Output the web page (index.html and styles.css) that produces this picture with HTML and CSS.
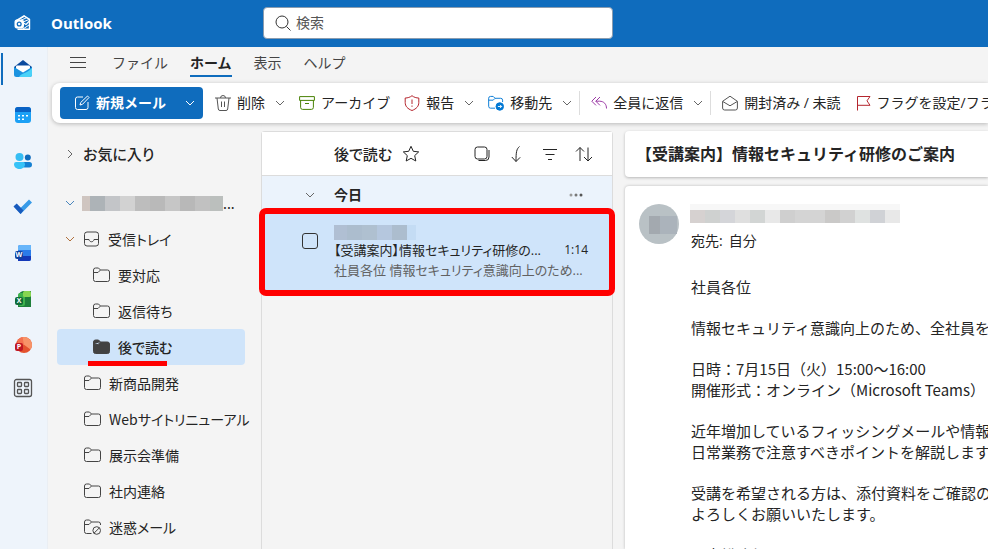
FILE: index.html
```
<!DOCTYPE html>
<html lang="ja">
<head>
<meta charset="utf-8">
<title>Outlook</title>
<link rel="stylesheet" href="styles.css">
</head>
<body>
<svg class="defs" aria-hidden="true">
	<symbol id="down" viewBox="0 0 10 10"><path d="M1 3l4 4 4-4"/></symbol>
	<symbol id="right" viewBox="0 0 10 10"><path d="M3 1l4 4-4 4"/></symbol>
	<symbol id="folder" viewBox="0 0 17 16"><path d="M.5 3A2 2 0 0 1 2.500 1h3l2 2H14.500a2 2 0 0 1 2 2V12.500a2 2 0 0 1-2 2H2.500a2 2 0 0 1-2-2zM.5 5.500h4.500L7.500 3"/></symbol>
</svg>
<header class="top">
	<svg class="logo" viewBox="0 0 18 18" aria-hidden="true">
		<path d="M1.500 7L10 1.800l5.500 3.500v10H3.500" fill="none" stroke="#fff" stroke-width="1.400" stroke-linejoin="round"/>
		<path d="M4 6l7-4M6.500 6.500L13 3.500M9 8l6.500-2.700M9 15l6-4" fill="none" stroke="#fff"/>
		<rect x="1" y="6" width="8.500" height="8" rx="1.500" fill="#fff"/>
		<circle cx="5.200" cy="10" r="1.900" fill="none" stroke="#0f6cbd" stroke-width="1.300"/>
		<path d="M9.500 9l2.500 1.500 3.500-3.500" fill="none" stroke="#fff" stroke-width="1.200"/>
	</svg>
	<h1>Outlook</h1>
	<label class="search">
		<svg viewBox="0 0 18 18" width="18" height="18" aria-hidden="true"><circle cx="8" cy="8" r="6"/><path d="M12.500 12.500L16.500 16.500"/></svg>
		<input type="search" placeholder="検索" aria-label="検索">
	</label>
</header>
<div class="shell">
	<nav class="rail" aria-label="アプリ">
		<a class="on" href="#" aria-label="メール"><svg viewBox="0 0 20 20">
			<path d="M1 8l9-7 9 7v3H1z" fill="#0b4a9e"/><path d="M4 6.500h12a1 1 0 0 1 1 1V15H3V7.500a1 1 0 0 1 1-1z" fill="#fff"/>
			<path d="M1 8l9 5.500L19 8v7.500a2.500 2.500 0 0 1-2.500 2.500h-13A2.500 2.500 0 0 1 1 15.500z" fill="#1b93e0"/><path d="M6 18c2-4 7-3 13-9v6.500a2.500 2.500 0 0 1-2.500 2.500z" fill="#4ad2f8"/></svg></a>
		<a href="#" aria-label="予定表"><svg viewBox="0 0 20 20">
			<rect x="2" y="2" width="16" height="16" rx="3" fill="#1ca0f5"/><path d="M2 7V5a3 3 0 0 1 3-3h10a3 3 0 0 1 3 3v2z" fill="#0a62c4"/>
			<path d="M5 10h2v1.500H5zM9 10h2v1.500H9zM13 10h2v1.500h-2zM5 13.500h2V15H5zM9 13.500h2V15H9z" fill="#fff"/></svg></a>
		<a href="#" aria-label="連絡先"><svg viewBox="0 0 20 20">
			<circle cx="6.500" cy="6" r="4" fill="#35bdf3"/><circle cx="14.800" cy="6.500" r="3" fill="#0f6cbd"/>
			<rect x="9" y="11" width="10" height="5.500" rx="2.700" fill="#1580d2"/><path d="M1 13.200A2.200 2.200 0 0 1 3.200 11H9.800A2.200 2.200 0 0 1 12 13.200C12 19.500 1 19.500 1 13.200z" fill="#37c2f7"/></svg></a>
		<a href="#" aria-label="To Do"><svg viewBox="0 0 20 20">
			<path d="M1 9.500L3.500 7l4 4L16 2.500 19 5.500 7.700 17z" fill="#389be8"/><path d="M.5 9.500L3.700 6.500 10.500 13.500 7.500 17z" fill="#185abd"/></svg></a>
		<a href="#" aria-label="Word"><svg viewBox="0 0 20 20">
			<rect x="5" y="2" width="13" height="16" rx="2" fill="#2b7cea"/><path d="M5 7V4a2 2 0 0 1 2-2h11v5z" fill="#67b5fa"/><path d="M5 13h13v3a2 2 0 0 1-2 2H5z" fill="#1438b8"/>
			<rect x="2" y="8" width="8" height="8" rx="2" fill="#12439f"/><text x="6" y="14.200">W</text></svg></a>
		<a href="#" aria-label="Excel"><svg viewBox="0 0 20 20">
			<path d="M10 2h8v16H5V9a7 7 0 0 1 5-7z" fill="#1e7f3a"/><rect x="5" y="4" width="7" height="13" rx="2" fill="#3eb34c"/><rect x="10" y="2" width="8" height="6" rx="1.500" fill="#88d651"/>
			<rect x="2" y="8" width="8" height="8" rx="2" fill="#0f6b38"/><text x="6" y="14.200">X</text></svg></a>
		<a href="#" aria-label="PowerPoint"><svg viewBox="0 0 20 20">
			<circle cx="11" cy="10" r="8" fill="#e4522e"/><path d="M9 2.200A8 8 0 0 1 17.500 14.500L10 9z" fill="#f79368"/><path d="M5 4.700A8 8 0 0 1 9.500 2L11 10H4z" fill="#f4714f"/>
			<rect x="2" y="8" width="8" height="8" rx="2" fill="#c01823"/><text x="6" y="14.200">P</text></svg></a>
		<a href="#" aria-label="その他のアプリ"><svg class="apps" viewBox="0 0 20 20">
			<rect x="1.500" y="1.500" width="17" height="17" rx="2"/><rect x="4.500" y="4.500" width="4" height="4" rx=".8"/><rect x="11.500" y="4.500" width="4" height="4" rx=".8"/><rect x="4.500" y="11.500" width="4" height="4" rx=".8"/><rect x="11.500" y="11.500" width="4" height="4" rx=".8"/></svg></a>
	</nav>
	<main>
		<nav class="tabs" aria-label="リボン タブ">
			<button class="burger" aria-label="メニュー"><svg viewBox="0 0 16 14"><path d="M0 1.500h16M0 6.500h16M0 11.500h16"/></svg></button>
			<a href="#">ファイル</a>
			<a class="on" href="#">ホーム</a>
			<a href="#">表示</a>
			<a href="#">ヘルプ</a>
		</nav>
		<div class="ribbon">
			<button class="new">
				<svg class="ic" viewBox="0 0 16 16"><path d="M9 2H3.500A2 2 0 0 0 1.500 4v8.500a2 2 0 0 0 2 2H12a2 2 0 0 0 2-2V7M6 10l.7-2.500L13.500 1l1.500 1.500L8.500 9.300z"/></svg>
				新規メール
				<svg class="chev"><use href="#down"/></svg>
			</button>
			<button class="tool"><svg class="ic gray" viewBox="0 0 16 16"><path d="M0 3h16M5.500 3a2.500 2.500 0 0 1 5 0M2 3l1.300 11a1.700 1.700 0 0 0 1.700 1.500h6a1.700 1.700 0 0 0 1.700-1.500L14 3M6.500 6.500v5.500M9.500 6.500v5.500"/></svg>削除<svg class="chev"><use href="#down"/></svg></button>
			<button class="tool"><svg class="ic green" viewBox="0 0 16 16"><path d="M.6 1.600h14.800v3.800H.6zM1.600 5.400v7a2 2 0 0 0 2 2h8.800a2 2 0 0 0 2-2v-7M6 8.500h4"/></svg>アーカイブ</button>
			<button class="tool"><svg class="ic red" viewBox="0 0 16 16"><path d="M8 .7C10 2.300 12.300 3 14.800 3v4.500c0 3.700-2.300 6.300-6.800 8-4.500-1.700-6.800-4.300-6.800-8V3C3.700 3 6 2.300 8 .7zM8 4.500v4.500M8 10.500v1.300"/></svg>報告<svg class="chev"><use href="#down"/></svg></button>
			<button class="tool"><svg class="ic blue" viewBox="0 0 17 16"><path d="M7.500 13.500H2.700a2 2 0 0 1-2-2V3a2 2 0 0 1 2-2h2.800l2 2h6a2 2 0 0 1 2 2v2M.7 5h4.800l2-2"/><circle cx="12.500" cy="11.700" r="4" fill="#0078d4"/><path class="inv" d="M10.500 11.700h4M12.800 10l1.700 1.700-1.700 1.700"/></svg>移動先<svg class="chev"><use href="#down"/></svg></button>
			<span class="sep"></span>
			<button class="tool"><svg class="ic purple" viewBox="0 0 16 16"><path d="M5 2L.8 6.200 5 10.400M9 2L4.800 6.200 9 10.400M4.800 6.200H8.500c4.500 0 7 3 7 7.300"/></svg>全員に返信<svg class="chev"><use href="#down"/></svg></button>
			<span class="sep"></span>
			<button class="tool"><svg class="ic gray" viewBox="0 0 16 16"><path d="M.6 6.300L8 1.200l7.400 5.100V13a2 2 0 0 1-2 2H2.600a2 2 0 0 1-2-2zM.8 6.500L8 10.800l7.200-4.300"/></svg>開封済み / 未読</button>
			<button class="tool"><svg class="ic red" viewBox="0 0 16 16"><path d="M2.500 15.500V1.500h12.500L12 5.800l3 4.500H2.500"/></svg>フラグを設定/フラグの解除</button>
		</div>
		<div class="work">
			<nav class="tree" aria-label="フォルダー">
				<a class="fav" href="#"><svg class="chev"><use href="#right"/></svg>お気に入り</a>
				<a class="acct" href="#" aria-label="アカウント"><svg class="chev tint"><use href="#down"/></svg><span class="mosaic"></span>...</a>
				<a href="#"><svg class="chev warm"><use href="#down"/></svg><svg class="ic" viewBox="0 0 16 16"><rect x="1" y="1" width="14" height="14" rx="2.500"/><path d="M1 8.500h4.500c.5 3 4.500 3 5 0H15"/></svg>受信トレイ</a>
				<a class="sub" href="#"><svg class="ic"><use href="#folder"/></svg>要対応</a>
				<a class="sub" href="#"><svg class="ic"><use href="#folder"/></svg>返信待ち</a>
				<a class="sub on" href="#" aria-current="page"><svg class="ic fill"><use href="#folder"/></svg>後で読む</a>
				<a class="item" href="#"><svg class="ic"><use href="#folder"/></svg>新商品開発</a>
				<a class="item" href="#"><svg class="ic"><use href="#folder"/></svg>Webサイトリニューアル</a>
				<a class="item" href="#"><svg class="ic"><use href="#folder"/></svg>展示会準備</a>
				<a class="item" href="#"><svg class="ic"><use href="#folder"/></svg>社内連絡</a>
				<a class="item" href="#"><svg class="ic" viewBox="0 0 17 16"><path d="M7.500 14.500h-5a2 2 0 0 1-2-2V3a2 2 0 0 1 2-2h3l2 2h7a2 2 0 0 1 2 2v1M.5 5.500h4.500L7.500 3"/><circle cx="12.700" cy="11.500" r="3.800"/><path d="M10.100 14.100l5.200-5.200"/></svg>迷惑メール</a>
			</nav>
			<section class="list">
				<div class="list-head">
					<h2>後で読む</h2>
					<button aria-label="お気に入りに追加"><svg viewBox="0 0 18 18"><path d="M9 1.300l2.300 5 5.400.6-4 3.700 1.100 5.400L9 13.300 4.200 16l1.100-5.400-4-3.700 5.400-.6z"/></svg></button>
					<span class="grow"></span>
					<button aria-label="選択"><svg viewBox="0 0 18 18"><rect x="2" y="2" width="12" height="12" rx="2.500"/><path d="M5.500 15.500h7a3.500 3.500 0 0 0 3.500-3.500V5"/></svg></button>
					<button aria-label="移動"><svg viewBox="0 0 18 18"><path d="M12.500 1.500C9.500 4 9 7 9 16.500M4.800 12L9 16.500l4.200-4.200"/></svg></button>
					<button aria-label="フィルター"><svg viewBox="0 0 18 18"><path d="M2 4.500h14M4.500 9.500h9M7 14.500h4"/></svg></button>
					<button aria-label="並べ替え"><svg viewBox="0 0 18 18"><path d="M5 16V2.500M1 6.500l4-4 4 4M13 2.500V16M9 12l4 4 4-4"/></svg></button>
				</div>
				<div class="group">
					<svg class="chev"><use href="#down"/></svg>
					<h3>今日</h3>
					<button aria-label="その他"><svg viewBox="0 0 14 4"><circle cx="2" cy="2" r="1.500" fill="#999"/><circle cx="7" cy="2" r="1.500" fill="#777"/><circle cx="12" cy="2" r="1.500" fill="#555"/></svg></button>
				</div>
				<article class="mail">
					<input type="checkbox" aria-label="メッセージを選択">
					<div class="mail-text">
						<span class="mosaic"></span>
						<div class="subject"><span>【受講案内】情報セキュリティ研修の...</span><time>1:14</time></div>
						<p>社員各位 情報セキュリティ意識向上のため...</p>
					</div>
				</article>
			</section>
			<section class="read">
				<h2>【受講案内】情報セキュリティ研修のご案内</h2>
				<article class="msg">
					<div class="avatar"><span></span></div>
					<div class="msg-main">
						<span class="mosaic"></span>
						<div class="to">宛先:<span>自分</span></div>
						<div class="body">
							<p>社員各位</p>
							<p>情報セキュリティ意識向上のため、全社員を対象に研修を実施します。</p>
							<p>日時：7月15日（火）15:00～16:00<br>開催形式：オンライン（Microsoft Teams）</p>
							<p>近年増加しているフィッシングメールや情報漏えいなど、<br>日常業務で注意すべきポイントを解説します。</p>
							<p>受講を希望される方は、添付資料をご確認のうえ、<br>よろしくお願いいたします。</p>
							<p>人事総務部</p>
						</div>
					</div>
				</article>
			</section>
		</div>
	</main>
</div>
</body>
</html>
```

FILE: styles.css
```
* { box-sizing: border-box; }
body, h1, h2, h3, p { margin: 0; }
body {
	display: flex;
	flex-direction: column;
	height: 100vh;
	overflow: hidden;
	background: #f4f4f4;
	color: #242424;
	font: 14px/20px "Open Sans", "Noto Sans CJK JP", sans-serif;
}
button, input { font: inherit; color: inherit; }
button { padding: 0; border: 0; background: none; }
a { color: inherit; text-decoration: none; }
svg { flex: none; fill: none; stroke: currentColor; }
.defs { position: absolute; width: 0; height: 0; }
.ic { width: 16px; height: 16px; }
.chev { width: 10px; height: 10px; color: #666; }
.grow { flex: 1; }

/* header */
.top {
	display: flex;
	align-items: center;
	flex: none;
	height: 47px;
	padding: 0 0 2px 14px;
	background: #0f6cbd;
	color: #fff;
}
.logo { width: 18px; height: 18px; }
.top h1 { width: 212px; margin-left: 19px; font-size: 15px; font-weight: 700; }
.search {
	display: flex;
	align-items: center;
	gap: 4px;
	width: 350px;
	height: 32px;
	padding: 0 10px;
	border: 1px solid #8a9caf;
	border-radius: 4px;
	background: #fff;
	color: #333;
}
.search input { flex: 1; min-width: 0; padding: 0; border: 0; outline: 0; background: none; }
.search input::placeholder { color: #555; }

.shell { display: flex; flex: 1; min-height: 0; }
.rail {
	display: flex;
	flex-direction: column;
	flex: none;
	width: 48px;
	padding-top: 6px;
	border-right: 1px solid #eaeef3;
	background: #eef4fb;
}
.rail a {
	display: flex;
	align-items: center;
	justify-content: center;
	height: 32px;
	margin: 0 0 14px 1px;
	padding-right: 4px;
	border-left: 2px solid transparent;
}
.rail .on { border-color: #0f6cbd; }
.rail svg { width: 20px; height: 20px; stroke: none; }
.rail .apps { stroke: #555; stroke-width: 1.3; }
.rail text { fill: #fff; font-size: 7px; font-weight: 700; text-anchor: middle; }
.rail a:last-child { margin-top: -3px; }

main { display: flex; flex-direction: column; flex: 1; min-width: 0; padding-left: 4px; }

.tabs { display: flex; align-items: center; gap: 22px; height: 36px; padding: 0 0 4px 18px; color: #444; }
.tabs a { padding: 3px 0 2px; border-bottom: 2px solid transparent; }
.tabs .on { border-color: #0f6cbd; color: #242424; font-weight: 700; }
.burger { display: flex; margin-right: 4px; }
.burger svg { width: 16px; height: 14px; }

.ribbon {
	display: flex;
	align-items: center;
	flex: none;
	height: 40px;
	padding-left: 8px;
	overflow: hidden;
	border-radius: 8px 0 0 8px;
	background: #fff;
	box-shadow: 0 1px 4px rgba(0, 0, 0, .25);
	white-space: nowrap;
}
.new {
	display: flex;
	align-items: center;
	gap: 6px;
	flex: none;
	width: 143px;
	height: 32px;
	margin-right: 5px;
	padding: 0 8px 0 14px;
	border-radius: 4px;
	background: #0f6cbd;
	color: #fff;
	font-weight: 600;
}
.new .chev { margin-left: auto; color: #fff; }
.tool { display: flex; align-items: center; flex: none; gap: 6px; padding: 0 7px; }
.tool .chev { margin-left: 4px; }
.sep { flex: none; width: 1px; height: 24px; margin-right: 4px; background: #ddd; }
.gray { color: #555; }
.green { color: #498205; }
.red { color: #b5262e; }
.blue { color: #0078d4; }
.blue .inv { stroke: #fff; }
.purple { color: #9b3aa5; }

.work { display: flex; flex: 1; min-height: 0; }

/* folder tree */
.tree {
	flex: none;
	width: 209px;
	padding: 13px 16px 0 5px;
	font-family: "Noto Sans CJK JP", sans-serif;
	font-feature-settings: "palt";
}
.tree a {
	display: flex;
	align-items: center;
	gap: 8px;
	height: 36px;
	padding-left: 8px;
	border-radius: 4px;
	white-space: nowrap;
}
.tree .ic { width: 17px; height: 16px; color: #444; }
.tree .fav { margin-bottom: 13px; font-size: 15px; font-weight: 500; }
.tree .acct { gap: 0; }
.acct .mosaic {
	width: 141px;
	height: 15px;
	margin-left: 7px;
	background: linear-gradient(90deg, #cfc5c0 8px, #adb3b7 8px 23px, #c3c5c8 23px 38px, #d2d2d2 38px 53px, #bdbdbd 53px 68px, #b9b9b9 68px 83px, #c6c6c6 83px 98px, #b8b8b8 98px 113px, #c1c1c1 113px 128px, #bbbfbd 128px);
}
.tint { color: #4a86bd; }
.warm { color: #b0703c; }
.tree .sub { padding-left: 36px; }
.tree .item { padding-left: 27px; }
.tree .on { position: relative; background: #cfe4fa; font-weight: 500; }
.tree .on::after {
	content: "";
	position: absolute;
	left: 31px;
	bottom: -1px;
	width: 79px;
	height: 5px;
	background: #f00;
}
.tree .fill { fill: #424242; }

/* message list */
.list {
	flex: none;
	width: 352px;
	margin-top: 8px;
	border: 1px solid #dcdcdc;
	border-bottom: 0;
	border-radius: 4px 4px 0 0;
	font-feature-settings: "palt";
}
.list-head {
	display: flex;
	align-items: center;
	gap: 16px;
	height: 44px;
	padding: 0 19px 0 72px;
	border-bottom: 1px solid #dcdcdc;
	background: #fff;
}
.list-head h2 { margin-right: -6px; font-size: 15px; font-weight: 500; }
.list-head button { display: flex; }
.list-head svg { width: 18px; height: 18px; }
.group { display: flex; align-items: center; height: 37px; padding: 0 29px 0 43px; background: #ebf3fc; }
.group h3 { flex: 1; margin-left: 19px; font-size: 14px; font-weight: 600; }
.group button { display: flex; }
.group button svg { width: 14px; height: 4px; stroke: none; }
.mail {
	display: flex;
	position: relative;
	gap: 16px;
	height: 78px;
	padding: 12px 24px 0 40px;
	background: #cfe4fa;
}
.mail::after {
	content: "";
	position: absolute;
	inset: -5px -3px;
	border: 6px solid #f00;
	border-radius: 7px;
}
.mail input {
	flex: none;
	appearance: none;
	width: 16px;
	height: 16px;
	margin: 8px 0 0;
	border: 1px solid #333;
	border-radius: 3px;
}
.mail-text { flex: 1; min-width: 0; font-size: 13px; white-space: nowrap; }
.mail .mosaic {
	display: block;
	width: 82px;
	height: 15px;
	background: linear-gradient(90deg, #b0bfd3 13px, #acbdce 13px 28px, #afc0d0 28px 43px, #b5c7de 43px 58px, #acbdce 58px 73px, #c4dcf4 73px);
}
.subject { display: flex; align-items: center; justify-content: space-between; }
.subject time { font-size: 12px; }
.mail p { color: #616161; }

/* reading pane */
.read { display: flex; flex-direction: column; flex: 1; min-width: 0; gap: 9px; padding: 8px 0 0 12px; }
.read h2 {
	flex: none;
	height: 46px;
	padding-left: 11px;
	border-radius: 4px 0 0 4px;
	background: #fff;
	box-shadow: 0 1px 3px rgba(0, 0, 0, .25);
	font-size: 16px;
	font-weight: 600;
	line-height: 46px;
	white-space: nowrap;
}
.msg {
	display: flex;
	flex: 1;
	gap: 11px;
	min-height: 0;
	padding: 18px 0 0 14px;
	overflow: hidden;
	border-radius: 4px 0 0 0;
	background: #fff;
	box-shadow: 0 0 3px rgba(0, 0, 0, .25);
}
.avatar { flex: none; width: 40px; height: 40px; padding: 12px 0 0 10px; border-radius: 50%; background: #b9c1c5; }
.avatar span { display: block; width: 28px; height: 18px; background: linear-gradient(90deg, #a3a9af 11px, #abb3bb 11px); }
.msg-main { white-space: nowrap; }
.msg-main .mosaic {
	display: block;
	width: 210px;
	height: 19px;
	border-top: 6px solid #f7f7f7;
	background: linear-gradient(90deg, #d6d1d0 15px, #cfd1d0 15px 30px, #d4d5d9 30px 45px, #dfdfdf 45px 60px, #d2d5d4 60px 75px, #e8e8e8 75px 90px, #cfcfcf 90px 105px, #d4d4d4 105px 135px, #cac9c8 135px 150px, #d1d1d1 150px 165px, #dfe2e1 165px 180px, #d0d2d6 180px 195px, #e8e8e8 195px);
}
.to { margin: 8px 0 0 1px; }
.to span { margin-left: 6px; }
.body {
	margin: 25px 0 0 1px;
	font-family: "Noto Sans CJK JP", sans-serif;
	font-size: 15px;
	line-height: 21px;
}
.body p { margin-bottom: 20px; }
```
